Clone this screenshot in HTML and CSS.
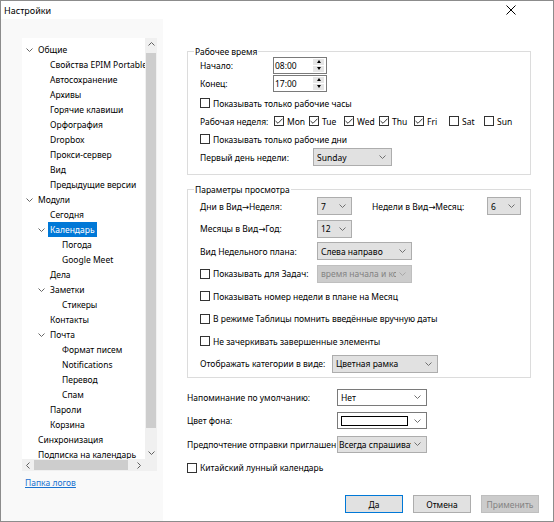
FILE: index.html
```html
<!DOCTYPE html>
<html lang="ru">
<head>
    <meta charset="UTF-8">
    <title>Настройки</title>
    <link rel="stylesheet" href="styles.css">
</head>
<body>
    <div class="window">
        <div class="titlebar">
            <span class="title">Настройки</span>
            <svg class="close" width="10" height="10" viewBox="0 0 10 10"><path d="M0.5 0.5 L9.5 9.5 M9.5 0.5 L0.5 9.5" stroke="#000" stroke-width="1" fill="none"/></svg>
        </div>
        <div class="main">
            <div class="sidebar">
                <div class="tree">
                    <div class="tree-view">
                        <ul class="tree-list">
                            <li class="lvl1"><span class="expander"><svg width="7" height="4" viewBox="0 0 7 4"><path d="M0.5 0.5 L3.5 3.5 L6.5 0.5" stroke="#666" fill="none"/></svg></span>Общие</li>
                            <li class="lvl2">Свойства EPIM Portable</li>
                            <li class="lvl2">Автосохранение</li>
                            <li class="lvl2">Архивы</li>
                            <li class="lvl2">Горячие клавиши</li>
                            <li class="lvl2">Орфография</li>
                            <li class="lvl2">Dropbox</li>
                            <li class="lvl2">Прокси-сервер</li>
                            <li class="lvl2">Вид</li>
                            <li class="lvl2">Предыдущие версии</li>
                            <li class="lvl1"><span class="expander"><svg width="7" height="4" viewBox="0 0 7 4"><path d="M0.5 0.5 L3.5 3.5 L6.5 0.5" stroke="#666" fill="none"/></svg></span>Модули</li>
                            <li class="lvl2">Сегодня</li>
                            <li class="lvl2"><span class="expander"><svg width="7" height="4" viewBox="0 0 7 4"><path d="M0.5 0.5 L3.5 3.5 L6.5 0.5" stroke="#666" fill="none"/></svg></span><span class="selected">Календарь</span></li>
                            <li class="lvl3">Погода</li>
                            <li class="lvl3">Google Meet</li>
                            <li class="lvl2">Дела</li>
                            <li class="lvl2"><span class="expander"><svg width="7" height="4" viewBox="0 0 7 4"><path d="M0.5 0.5 L3.5 3.5 L6.5 0.5" stroke="#666" fill="none"/></svg></span>Заметки</li>
                            <li class="lvl3">Стикеры</li>
                            <li class="lvl2">Контакты</li>
                            <li class="lvl2"><span class="expander"><svg width="7" height="4" viewBox="0 0 7 4"><path d="M0.5 0.5 L3.5 3.5 L6.5 0.5" stroke="#666" fill="none"/></svg></span>Почта</li>
                            <li class="lvl3">Формат писем</li>
                            <li class="lvl3">Notifications</li>
                            <li class="lvl3">Перевод</li>
                            <li class="lvl3">Спам</li>
                            <li class="lvl2">Пароли</li>
                            <li class="lvl2">Корзина</li>
                            <li class="lvl1">Синхронизация</li>
                            <li class="lvl1">Подписка на календарь</li>
                        </ul>
                        <div class="vscroll">
                            <div class="sb-arrow"><svg width="7" height="4" viewBox="0 0 7 4"><path d="M0.5 3.5 L3.5 0.5 L6.5 3.5" stroke="#606060" fill="none"/></svg></div>
                            <div class="vtrack"><div class="vthumb"></div></div>
                            <div class="sb-arrow"><svg width="7" height="4" viewBox="0 0 7 4"><path d="M0.5 0.5 L3.5 3.5 L6.5 0.5" stroke="#606060" fill="none"/></svg></div>
                        </div>
                    </div>
                    <div class="hscroll">
                        <div class="sb-arrow"><svg width="4" height="7" viewBox="0 0 4 7"><path d="M3.5 0.5 L0.5 3.5 L3.5 6.5" stroke="#606060" fill="none"/></svg></div>
                        <div class="htrack"><div class="hthumb"></div></div>
                        <div class="sb-arrow"><svg width="4" height="7" viewBox="0 0 4 7"><path d="M0.5 0.5 L3.5 3.5 L0.5 6.5" stroke="#606060" fill="none"/></svg></div>
                        <div class="sb-corner"></div>
                    </div>
                </div>
                <a class="log-link" href="#">Папка логов</a>
            </div>

            <div class="content">
                <!-- Рабочее время -->
                <div class="group group-work">
                    <span class="group-title">Рабочее время</span>
                    <div class="row">
                        <span class="lbl-time">Начало:</span>
                        <div class="spin">
                            <span class="spin-value">08:00</span>
                            <div class="spin-btns"><span class="spin-btn"><i class="tri-up"></i></span><span class="spin-btn"><i class="tri-down"></i></span></div>
                        </div>
                    </div>
                    <div class="row">
                        <span class="lbl-time">Конец:</span>
                        <div class="spin">
                            <span class="spin-value">17:00</span>
                            <div class="spin-btns"><span class="spin-btn"><i class="tri-up"></i></span><span class="spin-btn"><i class="tri-down"></i></span></div>
                        </div>
                    </div>
                    <div class="row row-gap">
                        <label class="check"><span class="cb"></span>Показывать только рабочие часы</label>
                    </div>
                    <div class="row">
                        <span class="lbl-week">Рабочая неделя:</span>
                        <label class="check day"><span class="cb"><svg width="8" height="6" viewBox="0 0 8 6"><path d="M0.5 3 L3 5.3 L7.5 0.7" stroke="#333" fill="none"/></svg></span>Mon</label>
                        <label class="check day"><span class="cb"><svg width="8" height="6" viewBox="0 0 8 6"><path d="M0.5 3 L3 5.3 L7.5 0.7" stroke="#333" fill="none"/></svg></span>Tue</label>
                        <label class="check day"><span class="cb"><svg width="8" height="6" viewBox="0 0 8 6"><path d="M0.5 3 L3 5.3 L7.5 0.7" stroke="#333" fill="none"/></svg></span>Wed</label>
                        <label class="check day"><span class="cb"><svg width="8" height="6" viewBox="0 0 8 6"><path d="M0.5 3 L3 5.3 L7.5 0.7" stroke="#333" fill="none"/></svg></span>Thu</label>
                        <label class="check day"><span class="cb"><svg width="8" height="6" viewBox="0 0 8 6"><path d="M0.5 3 L3 5.3 L7.5 0.7" stroke="#333" fill="none"/></svg></span>Fri</label>
                        <label class="check day"><span class="cb"></span>Sat</label>
                        <label class="check day"><span class="cb"></span>Sun</label>
                    </div>
                    <div class="row">
                        <label class="check"><span class="cb"></span>Показывать только рабочие дни</label>
                    </div>
                    <div class="row">
                        <span class="lbl-first">Первый день недели:</span>
                        <div class="select w79"><span class="select-text">Sunday</span><svg class="chev" width="7" height="4" viewBox="0 0 7 4"><path d="M0.5 0.5 L3.5 3.5 L6.5 0.5" stroke="#707070" fill="none"/></svg></div>
                    </div>
                </div>

                <!-- Параметры просмотра -->
                <div class="group group-view">
                    <span class="group-title">Параметры просмотра</span>
                    <div class="row">
                        <span class="lbl-view">Дни в Вид→Неделя:</span>
                        <div class="select w35"><span class="select-text">7</span><svg class="chev" width="7" height="4" viewBox="0 0 7 4"><path d="M0.5 0.5 L3.5 3.5 L6.5 0.5" stroke="#707070" fill="none"/></svg></div>
                        <span class="lbl-weeks">Недели в Вид→Месяц:</span>
                        <div class="select w34"><span class="select-text">6</span><svg class="chev" width="7" height="4" viewBox="0 0 7 4"><path d="M0.5 0.5 L3.5 3.5 L6.5 0.5" stroke="#707070" fill="none"/></svg></div>
                    </div>
                    <div class="row">
                        <span class="lbl-view">Месяцы в Вид→Год:</span>
                        <div class="select w35"><span class="select-text">12</span><svg class="chev" width="7" height="4" viewBox="0 0 7 4"><path d="M0.5 0.5 L3.5 3.5 L6.5 0.5" stroke="#707070" fill="none"/></svg></div>
                    </div>
                    <div class="row">
                        <span class="lbl-view">Вид Недельного плана:</span>
                        <div class="select w95"><span class="select-text">Слева направо</span><svg class="chev" width="7" height="4" viewBox="0 0 7 4"><path d="M0.5 0.5 L3.5 3.5 L6.5 0.5" stroke="#707070" fill="none"/></svg></div>
                    </div>
                    <div class="row">
                        <label class="check lbl-view"><span class="cb"></span>Показывать для Задач:</label>
                        <div class="select w95 disabled"><span class="select-text">время начала и ко</span><svg class="chev" width="7" height="4" viewBox="0 0 7 4"><path d="M0.5 0.5 L3.5 3.5 L6.5 0.5" stroke="#a8a8a8" fill="none"/></svg></div>
                    </div>
                    <div class="row">
                        <label class="check"><span class="cb"></span>Показывать номер недели в плане на Месяц</label>
                    </div>
                    <div class="row">
                        <label class="check"><span class="cb"></span>В режиме Таблицы помнить введённые вручную даты</label>
                    </div>
                    <div class="row">
                        <label class="check"><span class="cb"></span>Не зачеркивать завершенные элементы</label>
                    </div>
                    <div class="row">
                        <span class="lbl-cat">Отображать категории в виде:</span>
                        <div class="select w106"><span class="select-text">Цветная рамка</span><svg class="chev" width="7" height="4" viewBox="0 0 7 4"><path d="M0.5 0.5 L3.5 3.5 L6.5 0.5" stroke="#707070" fill="none"/></svg></div>
                    </div>
                </div>

                <div class="extras">
                    <div class="row">
                        <span class="lbl-extra">Напоминание по умолчанию:</span>
                        <div class="select w90 white"><span class="select-text">Нет</span><svg class="chev" width="7" height="4" viewBox="0 0 7 4"><path d="M0.5 0.5 L3.5 3.5 L6.5 0.5" stroke="#707070" fill="none"/></svg></div>
                    </div>
                    <div class="row">
                        <span class="lbl-extra">Цвет фона:</span>
                        <div class="select w90 white"><span class="swatch"></span><svg class="chev" width="7" height="4" viewBox="0 0 7 4"><path d="M0.5 0.5 L3.5 3.5 L6.5 0.5" stroke="#707070" fill="none"/></svg></div>
                    </div>
                    <div class="row">
                        <span class="lbl-extra">Предпочтение отправки приглашен</span>
                        <div class="select w90 tight"><span class="select-text">Всегда спрашиват</span><svg class="chev" width="7" height="4" viewBox="0 0 7 4"><path d="M0.5 0.5 L3.5 3.5 L6.5 0.5" stroke="#707070" fill="none"/></svg></div>
                    </div>
                    <div class="row">
                        <label class="check"><span class="cb"></span>Китайский лунный календарь</label>
                    </div>
                </div>

                <div class="buttons">
                    <button class="btn btn-default">Да</button>
                    <button class="btn">Отмена</button>
                    <button class="btn" disabled>Применить</button>
                </div>
            </div>
        </div>
    </div>
</body>
</html>
```

FILE: styles.css
```css
body {
    margin: 0;
    font-family: "Noto Sans", "DejaVu Sans", sans-serif;
    font-size: 8.5px;
    color: #000;
    background: #fff;
}
.window {
    width: 554px;
    height: 522px;
    box-sizing: border-box;
    border: 1px solid #8c8c8c;
    display: flex;
    flex-direction: column;
    background: #fff;
}
.titlebar {
    height: 18px;
    flex: none;
    display: flex;
    align-items: center;
    justify-content: space-between;
    padding: 0 37px 0 3px;
}
.title {
    font-size: 9px;
}
.main {
    flex: 1;
    display: flex;
    min-height: 0;
}

/* левая панель с деревом */
.sidebar {
    width: 162px;
    flex: none;
    box-sizing: border-box;
    background: #f9f9f9;
    padding: 19px 0 0 21px;
}
.tree {
    width: 135px;
    background: #fff;
}
.tree-view {
    height: 421px;
    display: flex;
}
.tree-list {
    flex: 1;
    list-style: none;
    margin: 0;
    padding: 4px 0 0;
    overflow: hidden;
}
.tree-list li {
    height: 15px;
    line-height: 15px;
    white-space: nowrap;
    display: flex;
    align-items: center;
}
.lvl1 { padding-left: 16px; }
.lvl2 { padding-left: 28px; }
.lvl3 { padding-left: 40px; }
.expander {
    width: 12px;
    margin-left: -12px;
    flex: none;
    display: flex;
    align-items: center;
}
.selected {
    background: #0078d7;
    color: #fff;
    padding: 0 2px;
    margin-left: -2px;
}
.vscroll {
    width: 12px;
    flex: none;
    background: #f0f0f0;
    display: flex;
    flex-direction: column;
}
.sb-arrow {
    width: 12px;
    height: 12px;
    flex: none;
    display: flex;
    align-items: center;
    justify-content: center;
}
.vtrack {
    flex: 1;
    padding: 3px 1px 0;
}
.vthumb {
    height: 375px;
    background: #cdcdcd;
}
.hscroll {
    height: 12px;
    display: flex;
    background: #f0f0f0;
}
.htrack {
    flex: 1;
    padding: 1px 0;
}
.hthumb {
    width: 94px;
    height: 10px;
    background: #cdcdcd;
}
.sb-corner {
    width: 12px;
    background: #f0f0f0;
}
.log-link {
    display: block;
    margin: 4px 0 0 3px;
    line-height: 15px;
    color: #1a72d0;
    text-decoration: underline;
}

/* правая часть */
.content {
    flex: 1;
    display: flex;
    flex-direction: column;
    padding: 32px 22px 0 24px;
}
.group {
    position: relative;
    border: 1px solid #dcdcdc;
}
.group-title {
    position: absolute;
    top: -8px;
    left: 6px;
    padding: 0 1px;
    line-height: 15px;
    background: #fff;
}
.group-work {
    padding: 4px 0 8px 12px;
}
.group-view {
    margin-top: 14px;
    padding: 7px 0 4px 12px;
    display: flex;
    flex-direction: column;
    gap: 4.5px;
}
.row {
    display: flex;
    align-items: center;
    height: 18px;
    white-space: nowrap;
}
.row-gap { margin-top: 2px; }

.lbl-time { width: 73px; }
.lbl-week { width: 74px; }
.lbl-first { width: 113px; }
.lbl-view { width: 117px; }
.lbl-weeks { width: 115px; margin-left: 20px; }
.lbl-cat { width: 132px; }
.lbl-extra { width: 150px; overflow: hidden; }

.check {
    display: flex;
    align-items: center;
    gap: 3px;
}
.day { width: 35px; }
.cb {
    width: 10px;
    height: 10px;
    flex: none;
    box-sizing: border-box;
    border: 1px solid #333;
    background: #fff;
    display: flex;
    align-items: center;
    justify-content: center;
}

.spin {
    width: 54px;
    height: 17px;
    box-sizing: border-box;
    border: 1px solid #7a7a7a;
    display: flex;
    align-items: center;
    padding-left: 1px;
}
.spin-value { flex: 1; }
.spin-btns {
    width: 11px;
    margin-right: 2px;
    display: flex;
    flex-direction: column;
    gap: 1px;
}
.spin-btn {
    height: 6px;
    background: #e6e6e6;
    display: flex;
    align-items: center;
    justify-content: center;
}
.tri-up {
    width: 0;
    height: 0;
    border-left: 2.5px solid transparent;
    border-right: 2.5px solid transparent;
    border-bottom: 3px solid #000;
}
.tri-down {
    width: 0;
    height: 0;
    border-left: 2.5px solid transparent;
    border-right: 2.5px solid transparent;
    border-top: 3px solid #000;
}

.select {
    height: 18px;
    box-sizing: border-box;
    border: 1px solid #adadad;
    background: #e1e1e1;
    display: flex;
    align-items: center;
    padding: 0 5px 0 3px;
    flex: none;
}
.select-text {
    flex: 1;
    overflow: hidden;
    white-space: nowrap;
}
.chev { flex: none; margin-left: 3px; }
.select.white {
    background: #fff;
    border-color: #7a7a7a;
    height: 17px;
}
.select.tight { padding-left: 1px; height: 17px; }
.select.disabled {
    background: #cccccc;
    border-color: #bfbfbf;
    color: #838383;
}
.swatch {
    flex: 1;
    height: 10px;
    box-sizing: border-box;
    border: 1px solid #000;
    background: #fff;
    margin-right: 3px;
}
.w34 { width: 34px; }
.w35 { width: 35px; }
.w79 { width: 79px; }
.w90 { width: 90px; }
.w95 { width: 95px; }
.w106 { width: 106px; }

.extras {
    margin-top: 11px;
    display: flex;
    flex-direction: column;
    gap: 6.5px;
}
.extras .row { height: 17px; }

.buttons {
    margin-top: 19px;
    margin-right: -8px;
    display: flex;
    justify-content: flex-end;
    gap: 10px;
}
.btn {
    width: 58px;
    height: 18px;
    box-sizing: border-box;
    border: 1px solid #adadad;
    background: #e1e1e1;
    font-family: inherit;
    font-size: 8.5px;
    color: #000;
    padding: 0;
}
.btn-default {
    border-color: #0078d7;
}
.btn:disabled {
    background: #cccccc;
    border-color: #bfbfbf;
    color: #838383;
}
```
